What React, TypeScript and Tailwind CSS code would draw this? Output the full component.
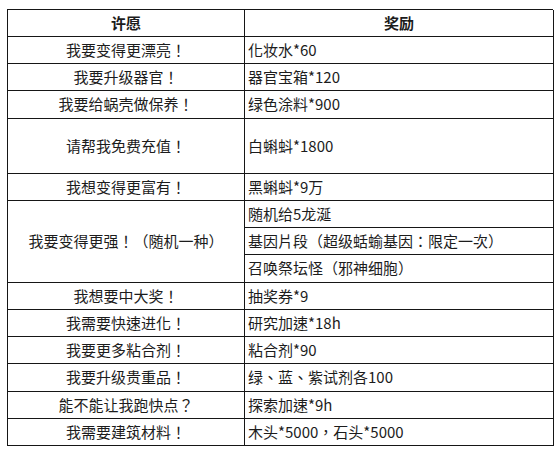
import React from "react";

type Row = { wish?: string; span?: number; reward: string; h: number };

const rows: Row[] = [
  { wish: "我要变得更漂亮！", reward: "化妆水*60", h: 27 },
  { wish: "我要升级器官！", reward: "器官宝箱*120", h: 27 },
  { wish: "我要给蜗壳做保养！", reward: "绿色涂料*900", h: 28 },
  { wish: "请帮我免费充值！", reward: "白蝌蚪*1800", h: 55 },
  { wish: "我想变得更富有！", reward: "黑蝌蚪*9万", h: 27 },
  { wish: "我要变得更强！（随机一种）", span: 3, reward: "随机给5龙涎", h: 27 },
  { reward: "基因片段（超级蛞蝓基因：限定一次）", h: 27 },
  { reward: "召唤祭坛怪（邪神细胞）", h: 28 },
  { wish: "我想要中大奖！", reward: "抽奖券*9", h: 27 },
  { wish: "我需要快速进化！", reward: "研究加速*18h", h: 27 },
  { wish: "我要更多粘合剂！", reward: "粘合剂*90", h: 27 },
  { wish: "我要升级贵重品！", reward: "绿、蓝、紫试剂各100", h: 28 },
  { wish: "能不能让我跑快点？", reward: "探索加速*9h", h: 27 },
  { wish: "我需要建筑材料！", reward: "木头*5000，石头*5000", h: 27 },
];

export default function App() {
  return (
    <div
      className="w-[559px] h-[452px] bg-white pt-[9px] pl-[7px] text-[15px] text-[#1c1c1c]"
      style={{ fontFamily: '"Noto Sans CJK TC", "Noto Sans CJK SC", sans-serif' }}
    >
      <div
        className="grid w-[546px] grid-cols-[237px_309px] border-t border-l border-[#161616]"
        style={{ gridTemplateRows: [27, ...rows.map((r) => r.h)].map((h) => h + "px").join(" ") }}
      >
        <div className="flex items-center justify-center border-r border-b border-[#161616] font-bold">许愿</div>
        <div className="flex items-center justify-center border-r border-b border-[#161616] font-bold">奖励</div>
        {rows.map((r, i) => (
          <React.Fragment key={i}>
            {r.wish && (
              <div
                className="flex items-center justify-center border-r border-b border-[#161616]"
                style={r.span ? { gridRow: `span ${r.span} / span ${r.span}` } : undefined}
              >
                {r.wish}
              </div>
            )}
            <div className="flex items-center border-r border-b border-[#161616] pl-[3px] col-start-2">{r.reward}</div>
          </React.Fragment>
        ))}
      </div>
    </div>
  );
}
